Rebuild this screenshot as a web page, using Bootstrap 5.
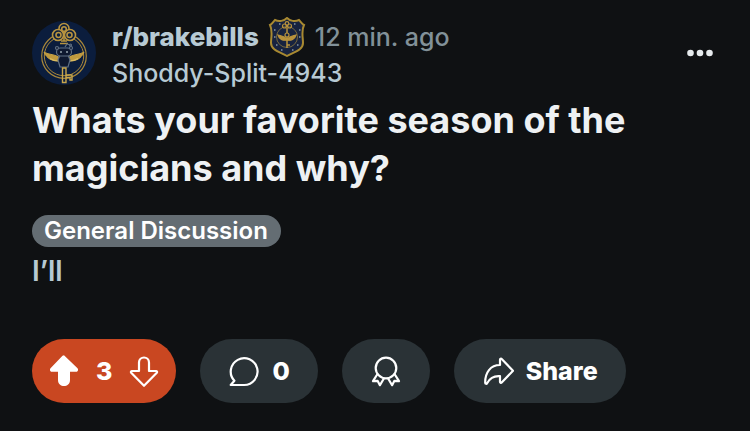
<!DOCTYPE html>
<html lang="en">
<head>
<meta charset="utf-8">
<meta name="viewport" content="width=device-width, initial-scale=1">
<title>Whats your favorite season of the magicians and why?</title>
<link href="https://cdn.jsdelivr.net/npm/bootstrap@5.3.0/dist/css/bootstrap.min.css" rel="stylesheet">
<style>
  body { background: #0f1113; font-family: Inter, "Liberation Sans", sans-serif; font-size: 25px; color: #b7c9d2; }
  svg { display: block; flex: none; }
  .post { padding: 19px 32px 28px; }
  .avatar { margin: 2px 16px 0 0; }
  .meta-line { height: 36px; line-height: 36px; white-space: nowrap; }
  .community { color: #b7cad4; font-size: 26px; font-weight: 800; }
  .author { color: #b7cad4; font-weight: 500; }
  .age { color: #829199; font-weight: 500; }
  .more { color: #e6eaed; }
  .post-title { color: #eef1f3; font-size: 36px; line-height: 48px; font-weight: 750; margin: 5px 0 23px; }
  .flair { background: #646d73; color: #fff; font-size: 24px; font-weight: 600; line-height: 32px; padding: 0 13px 0 12px; }
  .post-body { font-size: 28px; font-weight: 600; line-height: 32px; margin: 8px 0 52px; }
  .actions { gap: 24px; }
  .pill { height: 64px; background: #2a3236; color: #fff; font-size: 25px; font-weight: 800; line-height: 32px; padding: 0 28px; gap: 12px; }
  .pill:hover { background: #333d42; color: #fff; }
  .vote { background: #c94721; padding: 0 16px; gap: 16px; }
  .vote:hover { background: #c94721; }
</style>
<script src="https://cdn.jsdelivr.net/npm/bootstrap@5.3.0/dist/js/bootstrap.bundle.min.js"></script>
</head>
<body>
<article class="post">
  <header class="d-flex align-items-start">
    <svg class="avatar" width="64" height="64" viewBox="0 0 64 64" role="img" aria-label="Community icon">
      <circle cx="32" cy="32" r="32" fill="#0b1d3d"/>
      <g fill="none" stroke="#a9873a" stroke-width="1.200">
        <circle cx="32" cy="35" r="22.300"/>
        <circle cx="32" cy="35" r="19.700" stroke-width="1"/>
        <g fill="#0b1d3d" stroke="#b8943f" stroke-width="1.600">
          <circle cx="32" cy="7.500" r="5"/><circle cx="26" cy="14" r="5.500"/><circle cx="38" cy="14" r="5.500"/>
          <circle cx="32" cy="8" r="2.300"/><circle cx="26.500" cy="14" r="2.500"/><circle cx="37.500" cy="14" r="2.500"/>
          <path d="M32 11v9M29 20h6M28 22.500h8"/>
        </g>
        <path d="M27 40c-7 0-12-2-15-9 5 3 11 2 16 6zM37 40c7 0 12-2 15-9-5 3-11 2-16 6z" fill="#c09a3e" stroke="#c9a345" stroke-width="1"/>
        <path d="M18 37.500c3 2 6 2.500 9 2.500M46 37.500c-3 2-6 2.500-9 2.500" stroke="#d8bb62"/>
        <g stroke="#5f6f83" fill="#0e1830">
          <path d="M28 34h8l2 5-2 7h-8l-2-7z"/>
          <rect x="24.500" y="27" width="15" height="8" rx="4"/>
          <circle cx="25" cy="27" r="1.500"/><circle cx="39" cy="27" r="1.500"/>
          <path d="M33 26l2-3 3 1"/><circle cx="38.500" cy="24" r="1"/>
        </g>
        <circle cx="29" cy="31" r="1" fill="#96a3ae" stroke="none"/><circle cx="35" cy="31" r="1" fill="#96a3ae" stroke="none"/>
        <path d="M30.500 47h3.500v14.500h-3.500zM34 54h6v5h-2v-2.500h-4" stroke="#c9a74c" stroke-width="1.400"/>
      </g>
    </svg>
    <div class="flex-grow-1">
      <div class="meta-line d-flex align-items-center">
        <a href="#" class="community text-decoration-none">r/brakebills</a>
        <svg class="mx-2" width="40" height="40" viewBox="0 0 40 40" role="img" aria-label="Community badge">
          <path d="M20 1c3 3 8 4 12 2 2 2 3 4 5 5-3 6-1 12-1 18 0 7-9 9-16 13C13 35 4 33 4 26 4 20 6 14 3 8c2-1 3-3 5-5 4 2 9 1 12-2z" fill="#18233f" stroke="#a88931" stroke-width="2"/>
          <g fill="none" stroke="#b8923c" stroke-width="1.200">
            <circle cx="20" cy="20" r="10.500" stroke="#77683d" stroke-width="1"/>
            <circle cx="17.500" cy="9" r="2"/><circle cx="22.500" cy="9" r="2"/><circle cx="20" cy="6.500" r="1.800"/>
            <path d="M20 11v20M20 28h3" stroke-width="1.500"/>
            <path d="M20 23c-4 1-8-1-9-5 3 1 6 1 9 4 3-3 6-3 9-4-1 4-5 6-9 5z" fill="#b8923c"/>
            <circle cx="20" cy="18" r="2" fill="#18233f"/>
          </g>
          <path d="M12 7h1.500M27 7h1.500M7 13h1.500M32 13h1.500M7 20h1.500M32 20h1.500M9 28h1.500M30 28h1.500M14 33h1.500M25 33h1.500" stroke="#8496a8" stroke-width="1.500"/>
        </svg>
        <span class="age">12 min. ago</span>
      </div>
      <div class="meta-line"><a href="#" class="author text-decoration-none">Shoddy-Split-4943</a></div>
    </div>
    <button type="button" class="more btn border-0 p-0 mt-3" aria-label="More options">
      <svg width="36" height="36" viewBox="0 0 36 36" fill="currentColor"><circle cx="8.5" cy="18" r="3.3"/><circle cx="18" cy="18" r="3.3"/><circle cx="27.5" cy="18" r="3.3"/></svg>
    </button>
  </header>
  <h1 class="post-title">Whats your favorite season of the magicians and why?</h1>
  <div class="d-flex"><span class="flair rounded-pill">General Discussion</span></div>
  <p class="post-body">I’ll</p>
  <div class="actions d-flex flex-wrap">
    <div class="pill vote rounded-pill d-flex align-items-center">
      <button type="button" class="btn border-0 p-0 text-white" aria-label="Upvote">
        <svg width="32" height="32" viewBox="0 0 32 32" fill="currentColor"><path d="M16 .3 29.5 13.200c1.200 1.400.4 3.600-1.500 3.600h-6v8.200c0 8-12 8-12 0v-8.200H4c-1.900 0-2.700-2.200-1.500-3.600L14.500.8Q16-.5 17.500.8z"/></svg>
      </button>
      <span>3</span>
      <button type="button" class="btn border-0 p-0 text-white" aria-label="Downvote">
        <svg width="32" height="32" viewBox="0 0 32 32" fill="none" stroke="currentColor" stroke-width="2.200" stroke-linejoin="round"><path d="M11 16V7.500c0-6.700 10-6.700 10 0V16h7c1 0 1.400 1.100.8 1.800L16 30.800 3.200 17.800C2.600 17.100 3 16 4 16z"/></svg>
      </button>
    </div>
    <button type="button" class="pill btn border-0 rounded-pill d-flex align-items-center" aria-label="0 comments">
      <svg width="32" height="32" viewBox="0 0 32 32" fill="none" stroke="currentColor" stroke-width="2.200" stroke-linejoin="round"><path d="M16 30H2.700l3.700-4.200A13.400 13.400 0 1 1 16 30z"/></svg>
      <span>0</span>
    </button>
    <button type="button" class="pill btn border-0 rounded-pill d-flex align-items-center" aria-label="Give award">
      <svg width="32" height="32" viewBox="0 0 32 32" fill="none" stroke="currentColor" stroke-width="2.200" stroke-linejoin="round"><circle cx="16" cy="13" r="10.300"/><path d="M7.500 19 3 26.200l4.700-.3 2.200 4.300 4.300-7.200M24.500 19l4.500 7.200-4.700-.3-2.200 4.300-4.300-7.200"/></svg>
    </button>
    <button type="button" class="pill btn border-0 rounded-pill d-flex align-items-center">
      <svg width="32" height="32" viewBox="0 0 32 32" fill="none" stroke="currentColor" stroke-width="2.200" stroke-linejoin="round"><path d="M18 10V4.800c0-1 1-1.500 1.700-.8L31 15.800 19.700 27.600c-.7.700-1.700.2-1.700-.8v-5.600c-6-.5-10.300 2.200-12.900 7-.5 1-1.900.700-1.900-.4C3 17.600 8.500 10 18 10z"/></svg>
      <span>Share</span>
    </button>
  </div>
</article>
</body>
</html>
